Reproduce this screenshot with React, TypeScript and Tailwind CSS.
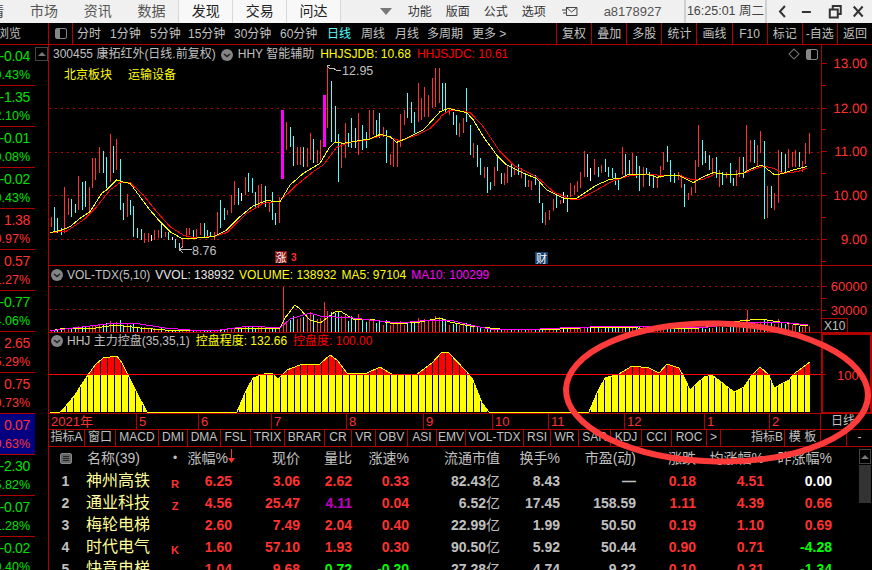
import React from 'react'

// candle strings are read as "x,top,bottom,colour" in zoomed pixels (3x), converted to page coords below
const leftRaw = "2,470,500,r 12,440,515,c 22,475,520,c 33,505,525,c 43,380,520,r 55,415,465,r 64,418,470,c 74,432,460,c 85,348,450,r 96,365,450,c 106,362,440,c 116,380,460,r 126,295,385,r 136,295,360,r 148,262,340,r 158,272,340,c 169,292,385,c 179,222,365,r 189,258,340,c 199,237,330,r 209,297,450,c 220,430,480,c 230,403,470,r 241,420,465,c 250,438,530,c 262,505,535,c 272,508,540,c 283,520,548,r 293,520,545,r 303,525,543,w 313,510,540,r 323,510,535,r 334,490,535,c 344,515,532,r 355,515,540,c 365,530,540,w 376,537,565,c 386,548,570,c 397,533,565,r 407,505,530,r 418,503,525,r 428,510,530,c 438,508,530,r 449,490,525,r 461,490,530,c 471,510,530,c 481,515,530,c 491,515,540,r 500,456,525,r 511,420,505,c 521,445,480,c 532,450,465,r 542,405,460,r 553,362,435,r 563,385,435,c 573,400,422,w 584,350,405,r 595,340,395,c 605,355,400,c 615,397,440,c 625,375,445,r 634,372,435,r 646,378,440,c 656,425,455,r 667,395,480,c 676,460,495,c 688,410,490,r 709,185,270,r 719,200,260,c 730,228,318,c 740,262,315,r 749,262,315,r 760,262,320,c 770,265,320,r 781,220,300,r 790,237,310,c 801,270,310,r 811,240,300,r 832,20,205,r 844,63,245,c 854,137,250,c 865,222,365,c 874,245,325,r 884,190,295,r 894,220,262,c 904,175,265,c 915,205,265,c 925,160,285,r 937,195,270,c 947,215,265,c 958,150,240,r 968,150,225,r 978,180,228,c 988,158,235,c 998,200,232,r 1009,210,310,c 1019,282,315,r 1029,240,322,r 1040,245,320,r 1051,162,260,r 1061,150,195,r 1072,100,175,c 1082,125,190,c 1093,155,220,c 1103,70,185,r 1113,115,180,r 1122,80,170,r 1133,105,170,r 1146,55,145,r 1156,25,140,r 1166,25,130,r"
const rightRaw = "5,70,150,c 15,70,155,c 27,145,165,r 38,155,195,c 47,165,225,c 58,190,230,r 68,175,220,r 79,85,185,c 89,195,285,c 100,250,295,r 110,255,322,c 121,295,345,c 131,320,355,r 140,320,400,c 151,365,390,c 161,322,378,r 172,290,332,c 182,340,372,c 193,340,375,r 202,315,370,r 213,310,350,c 223,320,345,r 234,312,345,c 244,325,355,r 255,340,380,c 264,360,382,r 274,362,390,r 285,345,375,c 296,365,428,c 307,428,490,c 316,455,495,r 327,450,480,r 338,418,452,r 349,400,445,c 359,420,432,r 370,395,430,w 380,405,455,c 391,368,410,r 401,375,405,r 411,362,395,r 421,335,385,r 431,272,350,r 442,282,350,c 451,325,362,w 462,298,345,r 473,320,350,c 483,315,340,r 494,298,335,c 505,320,350,c 515,325,355,c 526,340,375,c 535,355,390,c 545,260,345,r 556,282,350,c 566,300,345,c 577,278,345,r 587,288,355,c 598,318,392,c 608,320,380,r 619,325,345,c 628,335,378,c 640,345,385,c 650,355,385,r 661,318,355,r 670,275,330,r 680,258,305,c 690,300,365,c 702,340,370,c 713,335,360,r 722,345,385,r 733,372,442,c 743,398,420,r 753,380,405,r 764,300,400,r 775,195,322,r 785,240,315,c 796,272,310,c 806,285,330,c 817,295,340,r 827,292,355,c 836,330,380,r 847,335,375,c 857,335,355,r 869,310,370,c 878,355,378,c 889,330,378,r 898,290,350,r 909,290,355,c 919,195,335,r 931,240,305,r 941,240,310,c 951,255,320,r 961,212,280,r 971,243,477,c 982,378,473,r 992,378,445,c 1003,400,450,r 1013,270,428,r 1023,275,340,c 1034,282,335,c 1045,268,325,r 1055,275,320,r 1066,270,320,r 1076,275,320,c 1086,303,335,r 1096,250,312,r 1106,218,282,r"

const colors: Record<string, string> = { r: '#ff3232', c: '#54ffff', w: '#ffffff' }

const parse = (raw: string, ox: number) =>
	raw.split(' ').map((s) => {
		const [x, t, b, c] = s.split(',')
		return { x: Math.round(ox + Number(x) / 3) + 0.5, top: 60 + Number(t) / 3, bot: 60 + Number(b) / 3, c: colors[c] }
	})

const candles = [...parse(leftRaw, 50), ...parse(rightRaw, 440)]

const zoomLine = (pts: number[][], ox: number) => pts.map(([x, y]) => `${ox + x / 3},${60 + y / 3}`).join(' ')

const yellowMa = zoomLine([[0,518],[30,512],[60,500],[90,475],[120,455],[155,400],[170,390],[200,360],[215,365],[240,370],[270,410],[300,450],[330,485],[360,515],[395,535],[430,535],[490,530],[530,510],[570,470],[610,437],[650,422],[690,425],[720,375],[760,340],[810,310],[840,260],[855,247],[880,250],[920,243],[960,237],[990,223],[1020,230],[1040,247],[1070,235],[1120,210],[1170,155]], 50) + ' ' + zoomLine([[0,155],[25,145],[80,158],[100,180],[130,230],[170,285],[200,315],[250,340],[290,355],[320,390],[370,415],[410,415],[470,375],[510,358],[540,355],[560,345],[620,342],[650,352],[690,345],[720,348],[760,368],[790,350],[820,338],[870,345],[910,340],[930,328],[965,315],[985,330],[1005,345],[1030,340],[1060,330],[1100,320]], 440)
const redMa = zoomLine([[0,518],[50,513],[100,480],[140,440],[180,390],[210,368],[240,368],[280,405],[320,455],[360,500],[400,525],[430,533],[490,530],[530,518],[590,460],[640,430],[690,423],[740,375],[790,335],[820,315],[860,262],[900,247],[950,240],[1000,225],[1030,235],[1050,243],[1100,225],[1140,205],[1170,175]], 50) + ' ' + zoomLine([[0,170],[30,150],[90,157],[130,200],[180,275],[220,315],[290,350],[340,395],[390,417],[420,417],[470,390],[520,362],[570,347],[620,342],[680,348],[720,347],[760,360],[790,358],[830,340],[880,345],[920,337],[970,318],[1000,325],[1030,340],[1070,335],[1100,325]], 440)

const volYellow = [[50,331],[65,328],[90,329],[115,325],[140,328],[165,330],[190,330],[215,331],[235,328],[265,328],[280,328],[285,318],[295,305],[300,309],[310,320],[320,323],[335,312],[340,311],[355,320],[370,319],[395,324],[420,322],[440,318],[450,322],[470,326],[490,328],[510,330],[540,329],[560,329],[600,327],[625,327],[650,329],[700,328],[740,321],[760,319],[780,322],[800,325],[808,326]]
const volMagenta = [[50,331],[65,329],[90,326],[115,323],[140,324],[165,328],[190,330],[220,330],[250,326],[280,328],[290,319],[310,313],[320,316],[335,317],[345,317],[370,320],[400,323],[430,320],[450,320],[470,325],[490,329],[520,330],[560,328],[620,326],[650,327],[700,328],[750,322],[780,322],[808,325]]

const interp = (x: number) => {
	for (let i = 1; i < volMagenta.length; i++) {
		const [x0, y0] = volMagenta[i - 1]
		const [x1, y1] = volMagenta[i]
		if (x <= x1) return y0 + ((y1 - y0) * (x - x0)) / (x1 - x0)
	}
	return 326
}

const tallVol: Record<number, number> = { 283: 45, 324: 30, 747: 27, 621: 12, 699: 14 }

const controlPts = [[50,412],[60,412],[65,407],[75,395],[80,387],[88,375],[95,365],[103,358],[117,356],[122,363],[128,375],[137,393],[147,412],[237,412],[245,393],[253,378],[267,373],[272,373],[278,379],[287,370],[300,365],[320,364],[330,355],[337,360],[347,373],[367,373],[380,367],[393,375],[417,374],[432,363],[442,352],[449,353],[465,370],[472,378],[482,403],[489,412],[589,412],[597,393],[605,378],[619,374],[632,366],[649,368],[659,373],[667,364],[679,368],[684,377],[690,390],[704,377],[712,375],[725,385],[734,392],[744,387],[752,375],[760,367],[769,375],[774,388],[789,380],[795,373],[810,362],[810,412]]
const controlStr = controlPts.map((p) => p.join(',')).join(' ')
const stripes = Array.from({ length: 112 }, (_, i) => Math.round(52 + i * 6.9) + 0.5)

const DOT = '#b00000'
const AXIS = '#b00000'

const DownBadge = () => (
	<svg width="12" height="12" viewBox="0 0 12 12" className="shrink-0">
		<circle cx="6" cy="6" r="6" fill="#858585" />
		<path d="M3 5l3 2.5L9 5" fill="none" stroke="#222" strokeWidth="1.6" />
	</svg>
)

const MainChart = () => {
	const axis = [['13.00', 63], ['12.00', 108], ['11.00', 151.5], ['10.00', 195.5], ['9.00', 239.5]] as [string, number][]
	return (
		<svg width="823" height="221" viewBox="49 45 823 221" className="block" shapeRendering="crispEdges">
			{[108, 152, 195, 239].map((y) => (
				<line key={y} x1="49" x2="821" y1={y + 0.5} y2={y + 0.5} stroke={DOT} strokeDasharray="2 4" />
			))}
			{candles.map((d, i) => (
				<line key={i} x1={d.x} x2={d.x} y1={d.top} y2={d.bot} stroke={d.c} />
			))}
			<rect x="281" y="110" width="3" height="69" fill="#ff00ff" />
			<rect x="323" y="95" width="3" height="52" fill="#ff00ff" />
			<polyline points={redMa} fill="none" stroke="#ff0000" />
			<polyline points={yellowMa} fill="none" stroke="#ffff00" />
			<line x1="821.5" x2="821.5" y1="45" y2="266" stroke={AXIS} />
			{[63.5, 85, 108, 129, 151.5, 173, 195.5, 217, 239.5, 261].map((y, i) => (
				<line key={y} x1="822" x2={i % 2 ? 826 : 827} y1={y} y2={y} stroke={AXIS} />
			))}
			<g fill="#ff3232" fontSize="13.5" textAnchor="end" textRendering="geometricPrecision">
				{axis.map(([t, y]) => (
					<text key={t} x="867" y={y + 4.5}>{t}</text>
				))}
			</g>
			<path d="M327 67v-2h3M327 66l3 3 3-1 3 2h5M192 249.5h-13M179 249.5l4-3M179 249.5l4 3" fill="none" stroke="#c0c0c0" />
			<g fill="#c0c0c0" fontSize="12.5">
				<text x="342" y="75">12.95</text>
				<text x="192" y="255">8.76</text>
			</g>
			<rect x="275" y="251" width="12" height="12" fill="#8a1010" />
			<text x="275.5" y="261.5" fill="#ffffff" fontSize="11">涨</text>
			<text x="291" y="261" fill="#ff3232" fontSize="10" fontWeight="700">3</text>
			<rect x="535" y="252" width="13" height="12" fill="#16406e" />
			<text x="536" y="262.5" fill="#ffffff" fontSize="11">财</text>
		</svg>
	)
}

const VolChart = () => (
	<svg width="823" height="67" viewBox="49 266 823 67" className="block" shapeRendering="crispEdges">
		<line x1="49" x2="821" y1="286.5" y2="286.5" stroke={DOT} strokeDasharray="2 4" />
		<line x1="49" x2="821" y1="309.5" y2="309.5" stroke={DOT} strokeDasharray="2 4" />
		{candles.map((d, i) => {
			const base = 332 - interp(d.x)
			const len = Math.min(d.bot - d.top, 40)
			const h = tallVol[Math.floor(d.x)] ?? Math.max(2, Math.round(base * (0.45 + len / 45)))
			return <line key={i} x1={d.x} x2={d.x} y1={332 - h} y2="332" stroke={d.c} />
		})}
		<line x1="283.5" x2="283.5" y1="287" y2="332" stroke="#ff3232" />
		<line x1="324.5" x2="324.5" y1="302" y2="332" stroke="#ff3232" />
		<line x1="747.5" x2="747.5" y1="310" y2="332" stroke="#ff3232" />
		<polyline points={volYellow.map((p) => p.join(',')).join(' ')} fill="none" stroke="#ffff00" />
		<polyline points={volMagenta.map((p) => p.join(',')).join(' ')} fill="none" stroke="#ff00ff" />
		<line x1="821.5" x2="821.5" y1="266" y2="333" stroke={AXIS} />
		{[286, 298, 310].map((y) => (
			<line key={y} x1="822" x2="827" y1={y + 0.5} y2={y + 0.5} stroke={AXIS} />
		))}
		<g fill="#ff3232" fontSize="13" textAnchor="end">
			<text x="867" y="291">60000</text>
			<text x="867" y="314.5">30000</text>
		</g>
		<rect x="821.5" y="318.5" width="26" height="14" fill="none" stroke={AXIS} />
		<text x="824" y="329.5" fill="#c0c0c0" fontSize="12">X10</text>
	</svg>
)

const HhjChart = () => (
	<svg width="823" height="81" viewBox="49 333 823 81" className="block" shapeRendering="crispEdges">
		<defs>
			<clipPath id="overLine">
				<rect x="49" y="333" width="780" height="41" />
			</clipPath>
		</defs>
		<polygon points={controlStr} fill="#ffff00" />
		<polygon points={controlStr} fill="#ff0000" clipPath="url(#overLine)" />
		{stripes.map((x) => (
			<line key={x} x1={x} x2={x} y1="350" y2="412" stroke="#000000" />
		))}
		<polyline points={controlPts.slice(0, -1).map((p) => p.join(',')).join(' ')} fill="none" stroke="#ffff00" />
		<line x1="49" x2="821" y1="374.5" y2="374.5" stroke="#ff0000" />
		<line x1="821.5" x2="821.5" y1="333" y2="414" stroke={AXIS} />
		<line x1="822" x2="826" y1="374.5" y2="374.5" stroke={AXIS} />
		<rect x="822" y="333.5" width="49" height="79" fill="none" stroke={AXIS} strokeWidth="2" />
		<text x="837" y="380" fill="#ff3232" fontSize="13">100.</text>
	</svg>
)

const Panel = ({ a, b, red, selected }: { a: string; b: string; red?: boolean; selected?: boolean }) => (
	<div className={`h-[41px] w-[35px] shrink-0 overflow-hidden border-b border-[#b00000] flex flex-col items-end pr-[5px] pt-[1px] whitespace-nowrap ${selected ? 'bg-[#000080]' : ''} ${red ? 'text-[#ff3232]' : 'text-[#00e000]'}`}>
		<div className="text-[14px] tracking-[-0.3px] leading-[20px]">{a}</div>
		<div className="text-[12.5px] leading-[18px]">{b}</div>
	</div>
)

const leftRows = [
	['-0.04', '0.43%', 0], ['-1.35', '2.10%', 0], ['-0.01', '0.08%', 0], ['-0.02', '0.43%', 0],
	['1.38', '0.97%', 1], ['0.57', '1.27%', 1], ['-0.77', '4.06%', 0], ['2.65', '5.29%', 1],
	['0.75', '0.73%', 1], ['0.07', '0.63%', 2], ['-2.30', '5.82%', 0], ['-0.07', '1.28%', 0], ['-0.02', '0.40%', 0],
] as [string, string, number][]

const periods = [['分时', 33], ['1分钟', 40], ['5分钟', 38], ['15分钟', 46], ['30分钟', 46], ['60分钟', 47], ['日线', 34], ['周线', 34], ['月线', 32], ['多周期', 45], ['更多 >', 40]] as [string, number][]
const actions = ['复权', '叠加', '多股', '统计', '画线', 'F10', '标记', '-自选', '返回']

const dates = [['2021年', 88], ['5', 62], ['6', 73], ['7', 75], ['8', 77], ['9', 69], ['10', 56], ['11', 76], ['12', 80], ['1', 65], ['2', 51]] as [string, number][]

const tabs = [['指标A', 36], ['窗口', 31], ['MACD', 43], ['DMI', 29], ['DMA', 33], ['FSL', 30], ['TRIX', 34], ['BRAR', 40], ['CR', 27], ['VR', 24], ['OBV', 32], ['ASI', 29], ['EMV', 29], ['VOL-TDX', 58], ['RSI', 27], ['WR', 28], ['SAR', 32], ['KDJ', 31], ['CCI', 30], ['ROC', 35], ['>', 14]] as [string, number][]

const gridCols = 'grid grid-cols-[32px_84px_20px_47px_68px_52px_57px_91px_60px_76px_60px_68px_68px]'

const R = '#ff3232'
const G = '#00ff00'
const S = '#c0c0c0'

const rows = [
	['1', '神州高铁', 'R', ['6.25', R], ['3.06', R], ['2.62', R], ['0.33', R], '82.43', ['8.43', S], ['—', S], ['0.18', R], ['4.51', R], ['0.00', '#ffffff']],
	['2', '通业科技', 'Z', ['4.56', R], ['25.47', R], ['4.11', '#c000c0'], ['0.04', R], '6.52', ['17.45', S], ['158.59', S], ['1.11', R], ['4.39', R], ['0.66', R]],
	['3', '梅轮电梯', '', ['2.60', R], ['7.49', R], ['2.04', R], ['0.40', R], '22.99', ['1.99', S], ['50.50', S], ['0.19', R], ['1.10', R], ['0.69', R]],
	['4', '时代电气', 'K', ['1.60', R], ['57.10', R], ['1.93', R], ['0.30', R], '90.50', ['5.92', S], ['50.44', S], ['0.90', R], ['0.71', R], ['-4.28', G]],
	['5', '快意电梯', '', ['1.04', R], ['9.68', R], ['0.72', G], ['-0.20', G], '27.28', ['4.74', S], ['9.22', S], ['0.10', R], ['0.31', R], ['-1.34', G]],
] as any[][]

const Num = ({ v }: { v: [string, string] }) => (
	<div className="text-right font-bold text-[14px]" style={{ color: v[1] }}>{v[0]}</div>
)

export default function App() {
	return (
		<div className="relative w-[872px] h-[570px] overflow-hidden bg-black flex flex-col font-['Liberation_Sans','Noto_Sans_CJK_SC',sans-serif] text-[#c0c0c0] text-[12px]">
			{/* top menu */}
			<div className="h-[23px] shrink-0 bg-[#f0f0f0] flex items-center text-[#444] whitespace-nowrap">
				<div className="w-[17px] overflow-hidden flex justify-end pr-[13px] text-[14px]">行情</div>
				{['市场', '资讯', '数据'].map((t) => (
					<div key={t} className="w-[54px] text-center text-[14px] text-[#555]">{t}</div>
				))}
				{['发现', '交易', '问达'].map((t) => (
					<div key={t} className="w-[54px] h-full flex items-center justify-center text-[14px] text-[#222] bg-[#f8f8f8] border-l border-[#d8d8d8]">{t}</div>
				))}
				<div className="w-[55px] h-full border-l border-[#d8d8d8] flex justify-end items-center pr-[3px] ml-[0px]">
					<div className="w-0 h-0 border-x-[6px] border-x-transparent border-t-[7px] border-t-[#777]" />
				</div>
				<div className="ml-[13px] flex gap-[15px]">
					{['功能', '版面', '公式', '选项'].map((t) => (
						<div key={t} className="w-[23px] text-[12px] text-[#333]">{t}</div>
					))}
				</div>
				<svg width="16" height="12" viewBox="0 0 16 12" className="ml-[17px]">
					<path d="M4.5 1.5h10.5v8H4.5zM4.5 1.5l5.2 4.5 5.3-4.5M0 4h4M1 7h3" fill="none" stroke="#444" />
				</svg>
				<div className="ml-[26px] w-[56px] text-[13px] text-[#555]">a8178927</div>
				<div className="ml-[24px] w-[84px] h-full flex items-center justify-center border-x-2 border-[#d0d0d0] text-[12.5px] text-[#444]">16:25:01 周二</div>
				<svg width="105" height="23" viewBox="0 0 105 23" fill="none" stroke="#333" strokeWidth="2">
					<path d="M18 6l-5 5.5 5 5.5" />
					<path d="M35 12h9" />
					<path d="M63 9.5h8v8h-8zM66 9V6h8v8h-3" />
					<path d="M87 6.5l9 10M96 6.5l-9 10" />
				</svg>
			</div>

			<div className="flex-1 flex min-h-0">
				{/* left change column */}
				<div className="w-[49px] shrink-0 border-r border-[#b00000] relative">
					<div className="h-[22px] overflow-hidden flex justify-end items-center border-b border-[#b00000] w-full whitespace-nowrap text-[12px] pr-[27px]">
						<span>浏览</span>
					</div>
					{leftRows.map(([a, b, k]) => (
						<Panel key={a + b} a={a} b={b} red={k > 0} selected={k === 2} />
					))}
					<div className="absolute left-[35px] top-[24px] w-[13px] h-[14px] border border-[#444] flex items-center justify-center">
						<div className="w-0 h-0 border-x-[4px] border-x-transparent border-b-[4px] border-b-[#777]" />
					</div>
				</div>

				{/* chart column */}
				<div className="w-[823px] shrink-0 flex flex-col">
					<div className="h-[22px] shrink-0 flex items-center border-b border-[#b00000] whitespace-nowrap">
						<div className="w-[24px] h-full shrink-0 flex items-center justify-center border-r border-[#b00000]">
							<div className="w-[12px] h-[11px] rounded-[2px] border border-[#858585] flex">
								<div className="w-[4px] bg-[#858585]" />
							</div>
						</div>
						<div className="w-[483px] flex pl-[4px] text-[12px]">
							{periods.map(([p, w]) => (
								<span key={p} className={`shrink-0 ${p === '日线' ? 'text-[#54ffff]' : ''}`} style={{ width: w }}>{p}</span>
							))}
						</div>
						{actions.map((a) => (
							<div key={a} className="flex-1 h-full flex items-center justify-center border-l border-[#b00000] text-[12px]">{a}</div>
						))}
					</div>

					<div className="relative h-[221px] shrink-0 border-b border-[#b00000]">
						<MainChart />
						<div className="absolute left-[4px] top-[2px] flex items-center whitespace-nowrap text-[12px] leading-[15px]">
							<span>300455 康拓红外(日线.前复权)</span>
							<span className="ml-[5px]"><DownBadge /></span>
							<span className="ml-[5px]">HHY 智能辅助</span>
							<span className="ml-[6px] text-[#ffff00]">HHJSJDB: 10.68</span>
							<span className="ml-[6px] text-[#ff0000]">HHJSJDC: 10.61</span>
						</div>
						<div className="absolute left-[15px] top-[21px] flex gap-[16px] text-[12px] text-[#ffff00]">
							<span>北京板块</span>
							<span>运输设备</span>
						</div>
						<div className="absolute left-[741px] top-[5px] w-[8px] h-[8px] rotate-45 border border-[#777]" />
						<div className="absolute left-[757px] top-[4px] w-[12px] h-[11px] rounded-[2px] border border-[#858585] flex">
							<div className="w-[4px] bg-[#858585]" />
						</div>
					</div>

					<div className="relative h-[67px] shrink-0 border-b border-[#b00000]">
						<VolChart />
						<div className="absolute left-[2px] top-[2px] flex items-center gap-[5px] whitespace-nowrap leading-[14px]">
							<DownBadge />
							<span className="-ml-[1px]">VOL-TDX(5,10)</span>
							<span className="text-[#e8e8e8]">VVOL: 138932</span>
							<span className="text-[#ffff00]">VOLUME: 138932</span>
							<span className="text-[#ffff00]">MA5: 97104</span>
							<span className="text-[#ff00ff]">MA10: 100299</span>
						</div>
					</div>

					<div className="relative h-[81px] shrink-0 border-b border-[#b00000]">
						<HhjChart />
						<div className="absolute left-[2px] top-[1px] flex items-center gap-[6px] whitespace-nowrap leading-[14px]">
							<DownBadge />
							<span className="-ml-[2px]">HHJ 主力控盘(35,35,1)</span>
							<span className="text-[#ffff00]">控盘程度: 132.66</span>
							<span className="text-[#ff0000]">控盘度: 100.00</span>
						</div>
					</div>

					{/* date axis */}
					<div className="h-[16px] shrink-0 flex border-b border-[#b00000] text-[#ff3232] text-[13px] leading-[15px]">
						{dates.map(([d, w]) => (
							<div key={d} className="shrink-0 border-r border-[#b00000] pl-[2px]" style={{ width: w }}>{d}</div>
						))}
						<div className="w-[50px] text-[#c0c0c0] text-[12px] pl-[10px]">日线</div>
					</div>

					{/* indicator tabs */}
					<div className="h-[17px] shrink-0 flex border-b border-[#b00000] text-[12px] leading-[15px] whitespace-nowrap">
						{tabs.map(([t, w]) => (
							<div key={t} className="shrink-0 text-center border-r border-[#b00000]" style={{ width: w }}>{t}</div>
						))}
						<div className="w-[64px] shrink-0 text-right pr-[1px] border-r border-[#b00000]">指标B</div>
						<div className="w-[36px] shrink-0 text-center border-r border-[#b00000]">模 板</div>
						<div className="w-[26px] shrink-0 border-r border-[#b00000]" />
						<div className="flex-1 text-center">-</div>
					</div>

					{/* stock table */}
					<div className="relative flex-1 overflow-hidden whitespace-nowrap">
						<div className={`${gridCols} h-[22px] items-center text-[14px]`}>
							<div className="pl-[11px]">
								<div className="w-[12px] h-[11px] rounded-[2px] bg-[#666] border border-[#888] flex flex-col justify-center gap-[1px] px-[2px]">
									<div className="h-px bg-[#222]" />
									<div className="h-px bg-[#222]" />
									<div className="h-px bg-[#222]" />
								</div>
							</div>
							<div className="pl-[6px]">名称(39)</div>
							<div className="text-center text-[12px]">•</div>
							<div className="relative text-right pr-[4px]">
								涨幅%
								<svg width="7" height="15" viewBox="0 0 7 15" className="absolute -right-[3px] top-[1px]">
									<path d="M3.5 0v10" stroke="#ff3232" />
									<path d="M0 9h7l-3.5 5z" fill="#ff3232" />
								</svg>
							</div>
							<div className="text-right">现价</div>
							<div className="text-right">量比</div>
							<div className="text-right">涨速%</div>
							<div className="text-right">流通市值</div>
							<div className="text-right">换手%</div>
							<div className="text-right">市盈(动)</div>
							<div className="text-right">涨跌</div>
							<div className="text-right">均涨幅%</div>
							<div className="text-right">昨涨幅%</div>
						</div>
						{rows.map((r) => (
							<div key={r[0]} className={`${gridCols} h-[22px] items-center`}>
								<div className="text-center pl-[1px] font-bold text-[14px]">{r[0]}</div>
								<div className="pl-[5px] text-[16px] text-[#ffff99]">{r[1]}</div>
								<div className="text-center text-[#ff3232] font-bold text-[11px] pt-[6px]">{r[2]}</div>
								<Num v={r[3]} />
								<Num v={r[4]} />
								<Num v={r[5]} />
								<Num v={r[6]} />
								<div className="text-right font-bold text-[14px]">{r[7]}<span className="font-normal">亿</span></div>
								<Num v={r[8]} />
								<Num v={r[9]} />
								<Num v={r[10]} />
								<Num v={r[11]} />
								<Num v={r[12]} />
							</div>
						))}
						{/* scrollbar */}
						<div className="absolute left-[810px] top-[2px] w-[12px] flex flex-col gap-[1px]">
							<div className="h-[15px] border border-[#444] flex items-center justify-center">
								<div className="w-0 h-0 border-x-[4px] border-x-transparent border-b-[4px] border-b-[#777]" />
							</div>
							<div className="h-[38px] bg-[#333]" />
						</div>
					</div>
				</div>
			</div>

			{/* hand-drawn marker ring over the chart */}
			<svg width="872" height="570" viewBox="0 0 872 570" className="absolute left-0 top-0 pointer-events-none">
				<ellipse cx="717" cy="392.5" rx="151" ry="69" fill="none" stroke="#ff3a3a" strokeWidth="6" transform="rotate(1.2 717 392.5)" />
			</svg>
		</div>
	)
}
